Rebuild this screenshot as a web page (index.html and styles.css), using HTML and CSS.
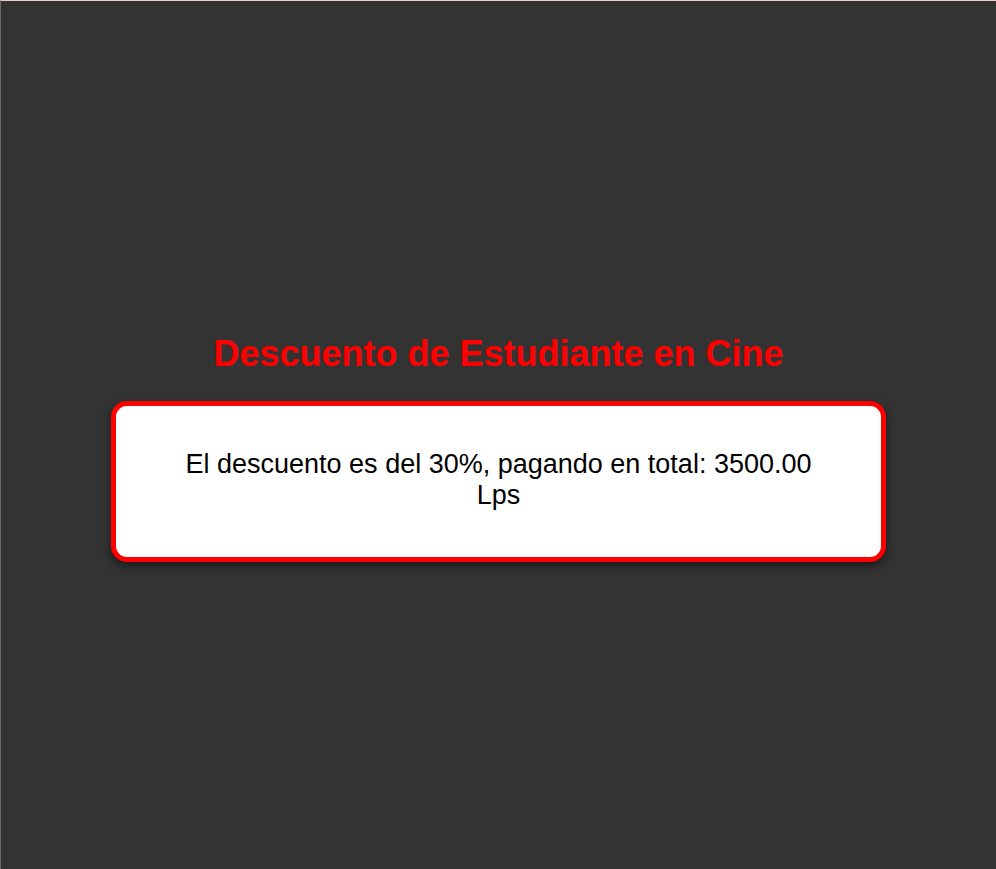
FILE: index.html
```html
<!DOCTYPE html>
<html lang="es">
<head>
<meta charset="utf-8">
<title>Descuento de Estudiante en Cine</title>
<link rel="stylesheet" href="styles.css">
</head>
<body>
<main class="page">
  <h1 class="title">Descuento de Estudiante en Cine</h1>
  <div class="card">
    <p class="result">El descuento es del 30%, pagando en total: 3500.00 Lps</p>
  </div>
</main>
</body>
</html>
```
FILE: styles.css
```css
html, body {
  margin: 0;
  padding: 0;
}
body {
  background: #333333;
  font-family: "Liberation Sans", Arial, sans-serif;
  border-top: 1px solid #f4c9c9;
  border-left: 1px solid #6a6a6a;
  box-sizing: border-box;
  height: 100vh;
}
.page {
  height: 100%;
  display: flex;
  flex-direction: column;
  align-items: center;
  justify-content: center;
}
.title {
  color: #ff0000;
  font-size: 36px;
  font-weight: bold;
  margin: 25px 0 26px;
}
.card {
  box-sizing: border-box;
  width: 775px;
  background: #ffffff;
  border: 5px solid #ff0000;
  border-radius: 16px;
  box-shadow: 0 4px 10px rgba(0, 0, 0, 0.5);
  padding: 43px 60px 46px;
  text-align: center;
}
.result {
  margin: 0;
  font-size: 27px;
  color: #000000;
}
```
